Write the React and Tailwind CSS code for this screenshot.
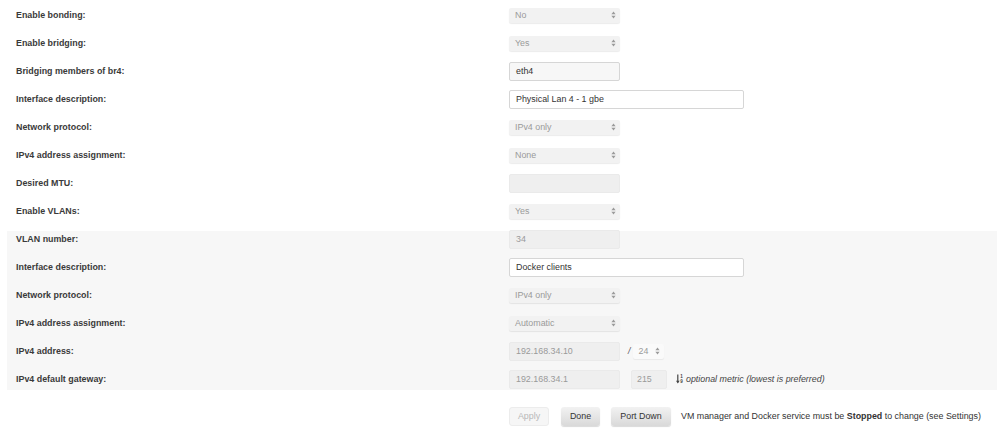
import React from "react";

const Arrows = () => (
  <svg width="5" height="8" viewBox="0 0 5 8" className="shrink-0">
    <path d="M2.5 0.5 L4.6 3.2 L0.4 3.2 Z" fill="#9a9a9a" />
    <path d="M2.5 7.5 L4.6 4.8 L0.4 4.8 Z" fill="#9a9a9a" />
  </svg>
);

const Select = ({ value, w = "w-[111px]" }) => (
  <div className={`${w} h-[15px] flex items-center justify-between pl-[6px] pr-[4px] rounded-[2px] bg-[#f2f2f2] shadow-[0_1px_1px_rgba(0,0,0,0.08)] text-[#9a9a9a]`}>
    <span>{value}</span>
    <Arrows />
  </div>
);

const Disabled = ({ value, w = "w-[111px]" }) => (
  <div className={`${w} h-[19px] flex items-center pl-[6px] rounded-[2px] bg-[#efefef] border border-[#eaeaea] text-[#9a9a9a]`}>
    {value}
  </div>
);

const TextIn = ({ value, w = "w-[111px]", bg = "bg-white" }) => (
  <div className={`${w} h-[19px] flex items-center pl-[6px] rounded-[2px] ${bg} border border-[#d6d6d6] text-[#333]`}>
    {value}
  </div>
);

const Row = ({ label, children, cls = "" }) => (
  <div className={`h-[28px] flex items-center ${cls}`}>
    <div className="w-[509px] pl-[16px] font-bold text-[#3a3a3a]">{label}</div>
    <div className="flex items-center">{children}</div>
  </div>
);

const SortIcon = () => (
  <svg width="8" height="10" viewBox="0 0 8 10" className="shrink-0">
    <path d="M1.8 0.5 V8.5" stroke="#444" strokeWidth="1.2" />
    <path d="M0 6.8 L1.8 9.4 L3.6 6.8 Z" fill="#444" />
    <text x="4.2" y="4" fontSize="4.5" fontFamily="Liberation Sans, Arial, sans-serif" fontWeight="bold" fill="#444">1</text>
    <text x="4.2" y="9" fontSize="4.5" fontFamily="Liberation Sans, Arial, sans-serif" fontWeight="bold" fill="#444">9</text>
  </svg>
);

export default function App() {
  return (
    <div className="w-[1000px] h-[437px] bg-white overflow-hidden text-[8.9px] leading-none font-['Liberation_Sans',Arial,sans-serif] text-[#333]">
      <div className="pt-[1px] flex flex-col">
        <Row label="Enable bonding:"><Select value="No" /></Row>
        <Row label="Enable bridging:"><Select value="Yes" /></Row>
        <Row label="Bridging members of br4:"><TextIn value="eth4" bg="bg-[#f7f7f7]" /></Row>
        <Row label="Interface description:"><TextIn value="Physical Lan 4 - 1 gbe" w="w-[235px]" /></Row>
        <Row label="Network protocol:"><Select value="IPv4 only" /></Row>
        <Row label="IPv4 address assignment:"><Select value="None" /></Row>
        <Row label="Desired MTU:"><Disabled value="" /></Row>
        <Row label="Enable VLANs:"><Select value="Yes" /></Row>
      </div>
      <div className="mt-[6px] ml-[7px] w-[990px] h-[159px] bg-[#f7f7f7] flex flex-col">
        <div className="-ml-[7px] -mt-[6px] flex flex-col">
          <Row label="VLAN number:"><Disabled value="34" /></Row>
          <Row label="Interface description:"><TextIn value="Docker clients" w="w-[235px]" /></Row>
          <Row label="Network protocol:"><Select value="IPv4 only" /></Row>
          <Row label="IPv4 address assignment:"><Select value="Automatic" /></Row>
          <Row label="IPv4 address:">
            <Disabled value="192.168.34.10" />
            <span className="ml-[8px] mr-[3px] italic text-[#555]">/</span>
            <div className="w-[31px] h-[15px] flex items-center justify-between pl-[5px] pr-[4px] rounded-[2px] bg-[#fafafa] shadow-[0_1px_1px_rgba(0,0,0,0.06)] text-[#9a9a9a]">
              <span>24</span>
              <Arrows />
            </div>
          </Row>
          <Row label="IPv4 default gateway:">
            <Disabled value="192.168.34.1" />
            <div className="ml-[11px] w-[36px] h-[19px] flex items-center pl-[5px] rounded-[2px] bg-[#efefef] border border-[#eaeaea] text-[#9a9a9a]">215</div>
            <div className="ml-[9px] flex items-center gap-[2px]">
              <SortIcon />
              <span className="italic text-[#444]">optional metric (lowest is preferred)</span>
            </div>
          </Row>
        </div>
      </div>
      <div className="mt-[17px] pl-[509px] flex items-center h-[19px]">
        <div className="w-[40px] h-[19px] flex items-center justify-center rounded-[3px] bg-[#f6f6f6] border border-[#ececec] text-[#b8b8b8]">Apply</div>
        <div className="ml-[12px] w-[39px] h-[19px] flex items-center justify-center rounded-[3px] bg-gradient-to-b from-[#f2f2f2] to-[#d9d9d9] shadow-[0_1px_1px_rgba(0,0,0,0.15)] text-[#333]">Done</div>
        <div className="ml-[11px] w-[60px] h-[19px] flex items-center justify-center rounded-[3px] bg-gradient-to-b from-[#f2f2f2] to-[#d9d9d9] shadow-[0_1px_1px_rgba(0,0,0,0.15)] text-[#333]">Port Down</div>
        <div className="ml-[10px] text-[#333]">
          VM manager and Docker service must be <b>Stopped</b> to change (see Settings)
        </div>
      </div>
    </div>
  );
}
